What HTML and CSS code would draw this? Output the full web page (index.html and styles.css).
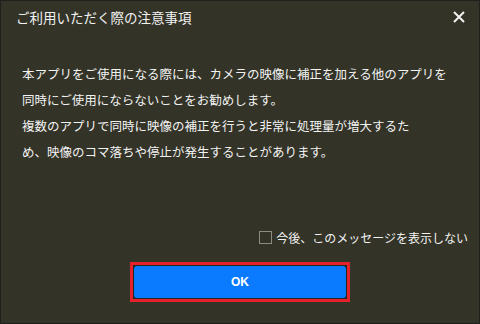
FILE: index.html
```html
<!DOCTYPE html>
<html lang="ja">
<head>
    <meta charset="UTF-8">
    <title>ご利用いただく際の注意事項</title>
    <link rel="stylesheet" href="styles.css">
</head>
<body>
    <div class="dialog">
        <!-- Title bar -->
        <div class="dialog-header">
            <span class="dialog-title">ご利用いただく際の注意事項</span>
            <button class="close-button" aria-label="閉じる">
                <svg width="12" height="12" viewBox="0 0 12 12">
                    <path d="M1 1 L11 11 M11 1 L1 11" stroke="#f2f2f2" stroke-width="2" fill="none"/>
                </svg>
            </button>
        </div>

        <!-- Message -->
        <div class="dialog-message">
            本アプリをご使用になる際には、カメラの映像に補正を加える他のアプリを<br>
            同時にご使用にならないことをお勧めします。<br>
            複数のアプリで同時に映像の補正を行うと非常に処理量が増大するた<br>
            め、映像のコマ落ちや停止が発生することがあります。
        </div>

        <!-- Don't show again -->
        <label class="dialog-option">
            <span class="checkbox"></span>
            <span>今後、このメッセージを表示しない</span>
        </label>

        <!-- Actions -->
        <div class="dialog-actions">
            <button class="ok-button"><span class="ok-label">OK</span></button>
        </div>
    </div>
</body>
</html>
```

FILE: styles.css
```css
body {
    margin: 0;
    padding: 0;
    background-color: #333327;
    font-family: "Noto Sans CJK JP", "Noto Sans", sans-serif;
    color: #f2f2f2;
}

.dialog {
    width: 480px;
    height: 324px;
    box-sizing: border-box;
    border: 1px solid #1f1f1c;
    background-color: #333327;
    display: flex;
    flex-direction: column;
}

/* Title bar */
.dialog-header {
    height: 31px;
    display: flex;
    align-items: center;
    justify-content: space-between;
    padding: 0 14px 0 15px;
}

.dialog-title {
    font-size: 13.5px;
}

.close-button {
    background: none;
    border: none;
    padding: 0;
    width: 12px;
    height: 12px;
    display: flex;
    cursor: pointer;
}

/* Message body */
.dialog-message {
    padding: 29px 0 0 21px;
    font-size: 12.5px;
    line-height: 26px;
}

/* Checkbox row */
.dialog-option {
    margin-top: auto;
    margin-bottom: 15px;
    height: 20px;
    display: flex;
    align-items: center;
    justify-content: flex-end;
    gap: 4px;
    padding-right: 11px;
    font-size: 12px;
}

.checkbox {
    width: 11px;
    height: 11px;
    border: 1px solid #8c8c84;
}

/* OK button: red focus frame, thin dark gap, blue face */
.dialog-actions {
    display: flex;
    justify-content: center;
    padding-bottom: 21px;
}

.ok-button {
    width: 220px;
    height: 40px;
    box-sizing: border-box;
    border: 3px solid #e5212b;
    padding: 1px;
    background-color: #26261e;
    display: flex;
    cursor: pointer;
}

.ok-label {
    flex: 1;
    display: flex;
    align-items: center;
    justify-content: center;
    background-color: #0a7bff;
    border-radius: 3px;
    color: #ffffff;
    font-family: "Liberation Sans", Arial, sans-serif;
    font-weight: bold;
    font-size: 12px;
}
```
